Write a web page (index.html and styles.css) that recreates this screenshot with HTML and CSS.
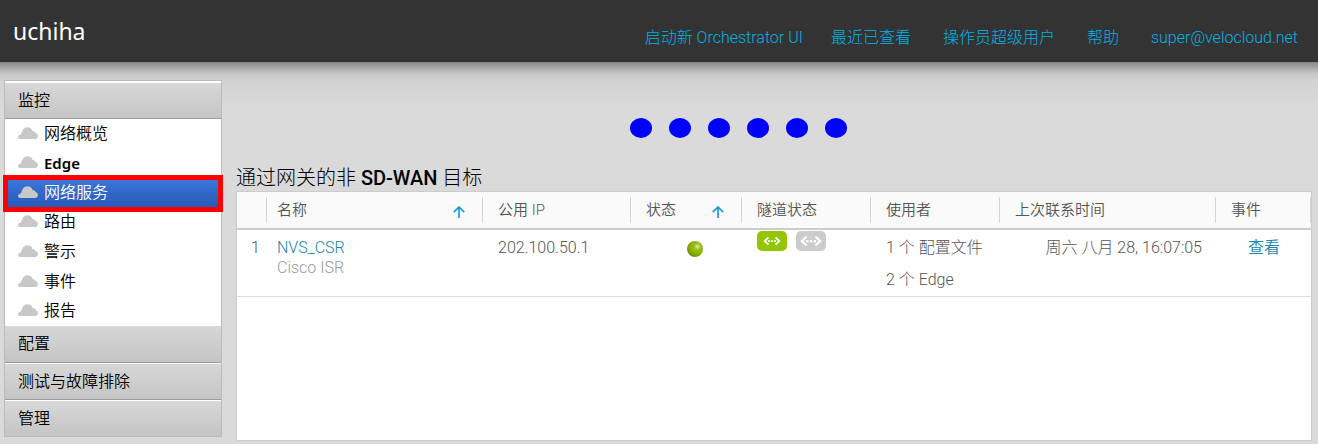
FILE: index.html
```html
<!DOCTYPE html>
<html lang="zh-CN">
<head>
<meta charset="utf-8">
<title>网络服务</title>
<link rel="stylesheet" href="styles.css">
</head>
<body>
<svg class="defs" width="0" height="0" aria-hidden="true">
  <symbol id="cloud" viewBox="0 0 20 12"><path d="M1.6 12Q0 11.6 0 9.8Q0.2 8 2.6 7.4Q3.4 6.8 3.7 5.2Q4.6 2 7 .8Q9.6-.5 12.4 1Q14 2 14.6 3.9Q17 3.9 17.6 6Q20 6.6 20 9Q20 11.4 17.6 12Z" fill="#c8c8c8"/></symbol>
  <symbol id="up" viewBox="0 0 12 12"><path d="M6 12V1.5M.8 6.2L6 1L11.2 6.2" fill="none" stroke="#1c9bdb" stroke-width="1.7"/></symbol>
  <symbol id="tunnel" viewBox="0 0 30 20"><path d="M10.5 5.5L6 10L10.5 14.5M19.5 5.5L24 10L19.5 14.5" fill="none" stroke="#fff" stroke-width="2.4"/><path d="M10 9h2.4v2.4H10zM13.8 9h2.4v2.4h-2.4zM17.6 9H20v2.4h-2.4z" fill="#fff"/></symbol>
</svg>
<header class="topbar">
  <div class="brand">uchiha</div>
  <nav class="topnav">
    <a href="#">启动新 Orchestrator UI</a>
    <a href="#">最近已查看</a>
    <a href="#" class="wide">操作员超级用户</a>
    <a href="#" class="wide">帮助</a>
    <a href="#" class="wide">super@velocloud.net</a>
  </nav>
</header>
<div class="page">
  <nav class="sidebar">
    <button class="section open">监控</button>
    <ul class="menu">
      <li><a href="#"><svg class="cloud"><use href="#cloud"/></svg>网络概览</a></li>
      <li><a href="#" class="strong"><svg class="cloud"><use href="#cloud"/></svg>Edge</a></li>
      <li><a href="#" class="selected"><svg class="cloud"><use href="#cloud"/></svg>网络服务</a></li>
      <li><a href="#"><svg class="cloud"><use href="#cloud"/></svg>路由</a></li>
      <li><a href="#"><svg class="cloud"><use href="#cloud"/></svg>警示</a></li>
      <li><a href="#"><svg class="cloud"><use href="#cloud"/></svg>事件</a></li>
      <li><a href="#"><svg class="cloud"><use href="#cloud"/></svg>报告</a></li>
    </ul>
    <button class="section">配置</button>
    <button class="section">测试与故障排除</button>
    <button class="section">管理</button>
  </nav>
  <main class="content">
    <div class="dots"><span></span><span></span><span></span><span></span><span></span><span></span></div>
    <h1 class="title">通过网关的非 <b>SD-WAN</b> 目标</h1>
    <div class="panel">
      <table class="grid">
        <colgroup><col class="c-num"><col><col class="c-ip"><col class="c-state"><col class="c-use"><col class="c-use"><col><col class="c-event"></colgroup>
        <thead>
          <tr>
            <th><div class="head"></div></th>
            <th><div class="head">名称<svg class="up"><use href="#up"/></svg></div></th>
            <th><div class="head">公用 IP</div></th>
            <th><div class="head">状态<svg class="up"><use href="#up"/></svg></div></th>
            <th><div class="head">隧道状态</div></th>
            <th><div class="head">使用者</div></th>
            <th><div class="head">上次联系时间</div></th>
            <th><div class="head">事件</div></th>
          </tr>
        </thead>
        <tbody>
          <tr>
            <td class="num">1</td>
            <td><a href="#">NVS_CSR</a><div class="sub">Cisco ISR</div></td>
            <td>202.100.50.1</td>
            <td class="state"><span class="led"></span></td>
            <td class="tunnels"><div class="pills"><svg class="pill on"><use href="#tunnel" x="3" y="2" width="24" height="16"/></svg><svg class="pill"><use href="#tunnel"  width="30" height="20"/></svg></div></td>
            <td><div>1 个 配置文件</div><div class="second">2 个 Edge</div></td>
            <td class="time">周六 八月 28, 16:07:05</td>
            <td class="event"><a href="#">查看</a></td>
          </tr>
        </tbody>
      </table>
    </div>
  </main>
</div>
</body>
</html>
```

FILE: styles.css
```css
* { box-sizing: border-box; }

body {
  margin: 0;
  min-height: 100vh;
  display: flex;
  flex-direction: column;
  background: #dadada;
  color: #000;
  font: 300 16px/20px Roboto, "Noto Sans CJK SC", sans-serif;
}

a { color: inherit; text-decoration: none; }
.defs { position: absolute; }

.topbar {
  display: flex;
  justify-content: space-between;
  align-items: center;
  height: 62px;
  padding: 0 20px 0 13px;
  background: #333;
}
.brand { color: #fff; font: 400 23px/30px "Noto Sans", sans-serif; }
.topnav { display: flex; gap: 28px; padding-top: 14px; color: #00b2e6; white-space: nowrap; }
.topnav .wide { margin-left: 4px; }

.page {
  flex: 1;
  display: flex;
  align-items: flex-start;
  gap: 14px;
  padding: 18px 6px 3px 4px;
  background: linear-gradient(#878787, #a9a9a9 6px, #c7c7c7 12px, #d3d3d3 20px, #dadada 44px);
}

.sidebar {
  flex: none;
  width: 218px;
  padding-top: 2px;
  border: 1px solid #bbb;
  background: #fff;
}
.section {
  display: block;
  width: 100%;
  height: 37px;
  padding: 0 13px;
  border: 0;
  border-bottom: 1px solid #999;
  background: linear-gradient(#d7d7d7, #c5c5c5);
  color: #000;
  font: inherit;
  font-weight: 350;
  text-align: left;
}
.section.open { height: 36px; }
.section + .section { border-top: 1px solid #fff; }
.section:last-child { height: 36px; border-bottom: 0; }
.menu {
  display: grid;
  grid-auto-rows: 1fr;
  height: 207px;
  margin: 0;
  padding: 0;
  list-style: none;
}
.menu li, .menu a { display: flex; flex: 1; align-items: center; }
.menu a { position: relative; height: 100%; padding-left: 13px; gap: 6px; font-weight: 350; }
.menu .strong { font-family: "Noto Sans", sans-serif; font-size: 15px; font-weight: 600; }
.menu .selected { color: #fff; background: linear-gradient(#3b78dc, #2759b5); }
.menu .selected::after {
  content: "";
  position: absolute;
  inset: -3px -2px -4px;
  border: 5px solid #f00;
}
.cloud { width: 20px; height: 12px; margin-bottom: 2px; }

.content { flex: 1; align-self: stretch; display: flex; flex-direction: column; min-width: 0; }
.dots { display: flex; justify-content: center; gap: 17px; padding: 38px 72px 0 0; }
.dots span { width: 22px; height: 20px; border-radius: 50%; background: #00f; }
.title { margin: 28px 0 0; font-size: 20px; line-height: 25px; font-weight: 300; }
.title b { font-weight: 500; }

.panel { flex: 1; border: 1px solid #ccc; background: #fff; }
.grid {
  width: 100%;
  table-layout: fixed;
  border-collapse: separate;
  border-spacing: 0;
  color: #555;
  font-size: 16px;
  line-height: 20px;
}
.c-num { width: 30px; }
.c-ip { width: 148px; }
.c-state { width: 111px; }
.c-use { width: 129px; }
.c-event { width: 95px; }
.grid th {
  padding: 5px 0;
  border-bottom: 2px solid #ccc;
  background: #fafafa;
  font-size: 15px;
  font-weight: 350;
  text-align: left;
}
.head {
  display: flex;
  justify-content: space-between;
  height: 26px;
  padding: 3px 17px 0 15px;
  border-right: 1px solid #d5d5d5;
}
th:first-child .head { padding: 0; }
th:nth-child(2) .head { padding-left: 10px; }
.up { width: 12px; height: 12px; margin-top: 6px; }
.grid td {
  height: 67px;
  padding: 8px 0 0 15px;
  border-bottom: 1px solid #ddd;
  vertical-align: top;
  white-space: nowrap;
}
.grid td a { color: #1787ad; font-weight: 350; }
.grid td:nth-child(2) { padding-left: 10px; }
.grid .num { padding-left: 14px; }
.sub { color: #999; }
.second { margin-top: 12px; }
.grid .state { padding-left: 56px; padding-top: 11px; }
.led {
  display: block;
  width: 16px;
  height: 16px;
  border-radius: 50%;
  background: radial-gradient(circle at 65% 35%, #d6e8a8 0, #98bd18 25%, #88b000 50%, #526c12 100%);
}
.grid .tunnels { padding-top: 1px; }
.pills { display: flex; gap: 9px; }
.pill { width: 30px; height: 20px; border-radius: 5px; background: #ccc; }
.pill.on { background: #94c600; }
.grid .time { padding: 8px 14px 0 0; text-align: right; }
.grid .event { padding-left: 32px; }
```
